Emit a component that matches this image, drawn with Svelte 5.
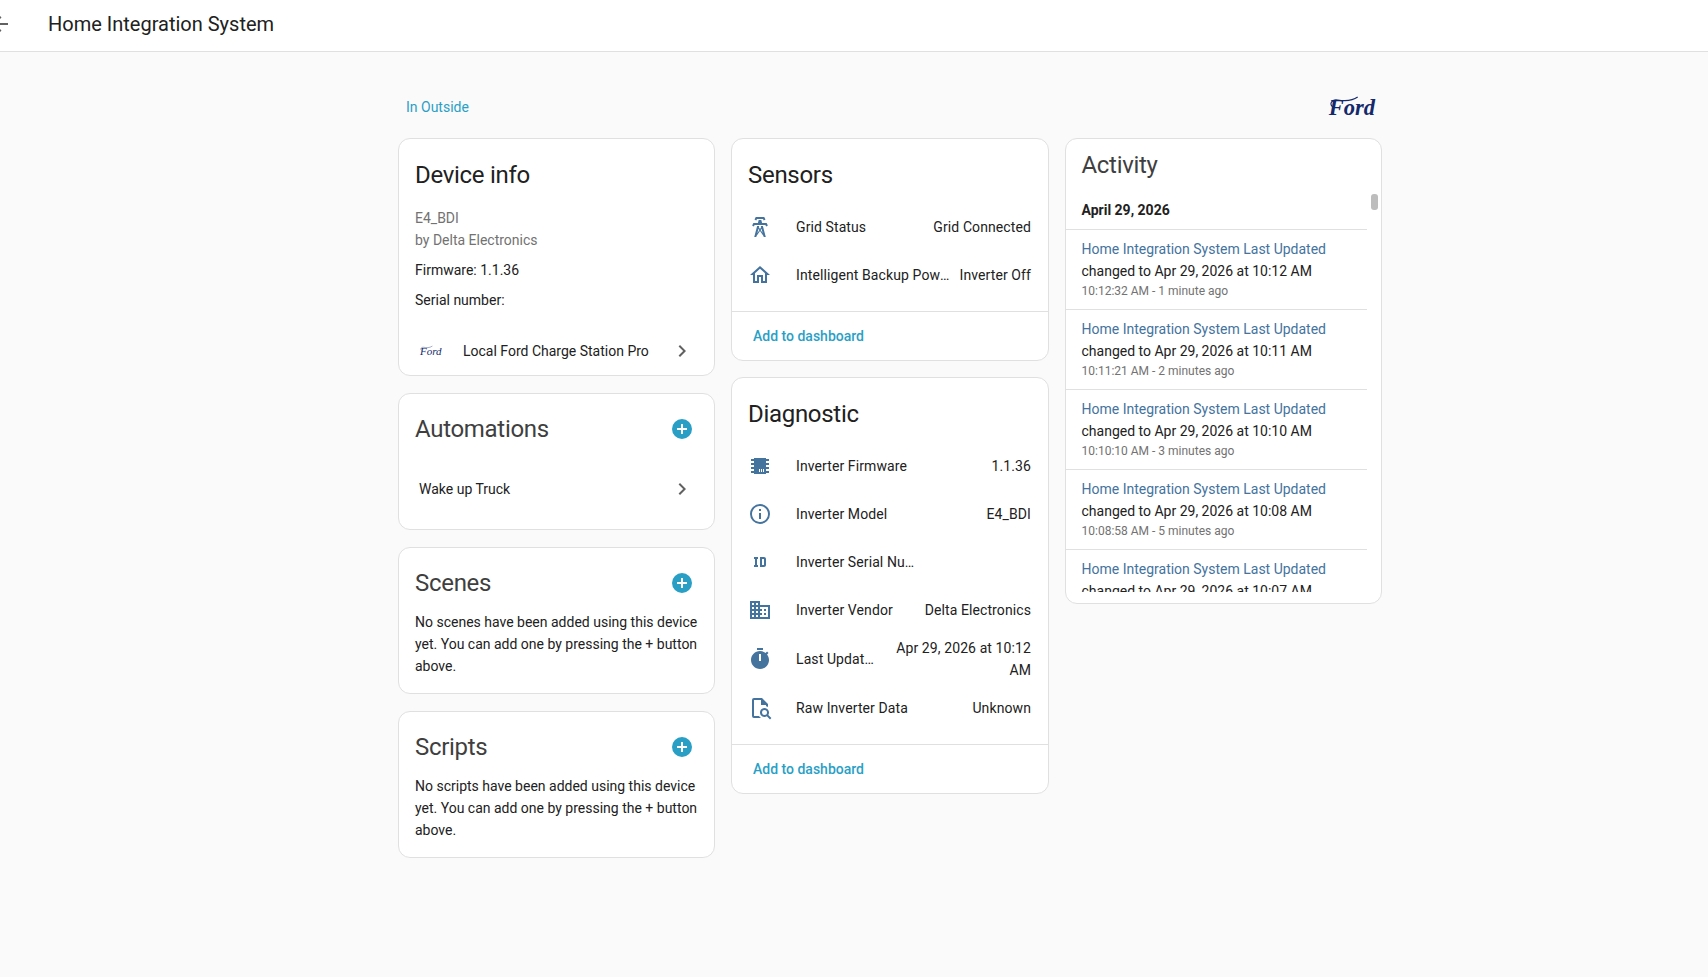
<script lang="ts">
  const icons = {
    tower: 'M8.28,5.45L6.5,4.55L7.76,2H16.23L17.5,4.55L15.72,5.44L15,4H9L8.28,5.45M18.62,8H14.09L13.3,5H10.7L9.91,8H5.38L4.1,10.55L5.89,11.44L6.62,10H17.38L18.1,11.45L19.89,10.56L18.62,8M17.77,22H15.7L15.46,21.1L12,15.9L8.53,21.1L8.3,22H6.23L9.12,11H11.19L10.83,12.35L12,14.1L13.16,12.35L12.81,11H14.88L17.77,22M11.4,15L10.5,13.65L9.32,18.13L11.4,15M14.68,18.12L13.5,13.64L12.6,15L14.68,18.12Z',
    home: 'M12 5.69L17 10.19V18H15V12H9V18H7V10.19L12 5.69M12 3L2 12H5V20H11V14H13V20H19V12H22L12 3Z',
    chip: 'M6,4H18V5H21V7H18V9H21V11H18V13H21V15H18V17H21V19H18V20H6V19H3V17H6V15H3V13H6V11H3V9H6V7H3V5H6V4M11,15V18H12V15H11M13,15V18H14V15H13M15,15V18H16V15H15Z',
    info: 'M11,9H13V7H11M12,20C7.59,20 4,16.41 4,12C4,7.59 7.59,4 12,4C16.41,4 20,7.59 20,12C20,16.41 16.41,20 12,20M12,2A10,10 0 0,0 2,12A10,10 0 0,0 12,22A10,10 0 0,0 22,12A10,10 0 0,0 12,2M11,17H13V11H11V17Z',
    id: 'M10 7V9H9V15H10V17H6V15H7V9H6V7H10M16 7C17.11 7 18 7.9 18 9V15C18 16.11 17.11 17 16 17H12V7M16 9H14V15H16V9Z',
    domain: 'M18,15H16V17H18M18,11H16V13H18M20,19H12V17H14V15H12V13H14V11H12V9H20M10,7H8V5H10M10,11H8V9H10M10,15H8V13H10M10,19H8V17H10M6,7H4V5H6M6,11H4V9H6M6,15H4V13H6M6,19H4V17H6M12,7V3H2V21H22V7H12Z',
    timer: 'M19.03 7.39L20.45 5.97C20 5.46 19.55 5 19.04 4.56L17.62 6C16.07 4.74 14.12 4 12 4C7.03 4 3 8.03 3 13S7.03 22 12 22C17 22 21 17.97 21 13C21 10.88 20.26 8.93 19.03 7.39M13 14H11V7H13V14M15 1H9V3H15V1Z',
    file: 'M14,2H6A2,2 0 0,0 4,4V20A2,2 0 0,0 6,22H13C12.59,21.75 12.2,21.44 11.86,21.1C11.53,20.77 11.25,20.4 11,20H6V4H13V9H18V10.18C18.71,10.34 19.39,10.61 20,11V8L14,2M20.31,18.9C21.64,16.79 21,14 18.91,12.68C16.8,11.35 14,12 12.69,14.08C11.35,16.19 12,18.97 14.09,20.3C15.55,21.23 17.41,21.23 18.88,20.32L22,23.39L23.39,22L20.31,18.9M16.5,19A2.5,2.5 0 0,1 14,16.5A2.5,2.5 0 0,1 16.5,14A2.5,2.5 0 0,1 19,16.5A2.5,2.5 0 0,1 16.5,19Z'
  };
  const chevron = 'M8.59,16.58L13.17,12L8.59,7.41L10,6L16,12L10,18L8.59,16.58Z';
  const plus = 'M17,13H13V17H11V13H7V11H11V7H13V11H17M12,2A10,10 0 0,0 2,12A10,10 0 0,0 12,22A10,10 0 0,0 22,12A10,10 0 0,0 12,2Z';
  const back = 'M20,11V13H8L13.5,18.5L12.08,19.92L4.16,12L12.08,4.08L13.5,5.5L8,11H20Z';
  // flourish on the F of the logo, the word itself stays real text
  const swash = 'M5 10 C-1 7 3 1 9 2 C15 3 23 4 30 -1';

  const sensors = [
    { icon: icons.tower, name: 'Grid Status', value: 'Grid Connected' },
    { icon: icons.home, name: 'Intelligent Backup Power', value: 'Inverter Off', nameWidth: 154 }
  ];
  const diagnostics = [
    { icon: icons.chip, name: 'Inverter Firmware', value: '1.1.36' },
    { icon: icons.info, name: 'Inverter Model', value: 'E4_BDI' },
    { icon: icons.id, name: 'Inverter Serial Number', value: '', nameWidth: 121 },
    { icon: icons.domain, name: 'Inverter Vendor', value: 'Delta Electronics' },
    { icon: icons.timer, name: 'Last Updated', value: 'Apr 29, 2026 at 10:12 AM', tall: true, nameWidth: 80 },
    { icon: icons.file, name: 'Raw Inverter Data', value: 'Unknown' }
  ];
  const activity = [
    { change: 'Apr 29, 2026 at 10:12 AM', time: '10:12:32 AM - 1 minute ago' },
    { change: 'Apr 29, 2026 at 10:11 AM', time: '10:11:21 AM - 2 minutes ago' },
    { change: 'Apr 29, 2026 at 10:10 AM', time: '10:10:10 AM - 3 minutes ago' },
    { change: 'Apr 29, 2026 at 10:08 AM', time: '10:08:58 AM - 5 minutes ago' },
    { change: 'Apr 29, 2026 at 10:07 AM', time: '10:07:47 AM - 6 minutes ago' }
  ];
</script>

<header class="topbar">
  <svg class="back" viewBox="0 0 24 24"><path d={back} /></svg>
  <h1>Home Integration System</h1>
</header>

<main class="page">
  <div class="above">
    <span class="area">In Outside</span>
    <span class="ford big">Ford<svg class="swash" viewBox="0 0 30 20"><path d={swash} /></svg></span>
  </div>

  <div class="columns">
    <div class="col">
      <section class="card">
        <h2 class="title first">Device info</h2>
        <div class="info">
          <div class="muted">E4_BDI</div>
          <div class="muted">by Delta Electronics</div>
          <div class="extra">Firmware: 1.1.36</div>
          <div class="extra">Serial number:</div>
        </div>
        <div class="link-row">
          <span class="ford small">Ford<svg class="swash" viewBox="0 0 30 20"><path d={swash} /></svg></span>
          <span class="link-text">Local Ford Charge Station Pro</span>
          <svg class="chevron" viewBox="0 0 24 24"><path d={chevron} /></svg>
        </div>
      </section>

      <section class="card auto">
        <div class="head">
          <h2 class="title soft">Automations</h2>
          <svg class="plus" viewBox="0 0 24 24"><path d={plus} /></svg>
        </div>
        <div class="link-row plain">
          <span class="link-text">Wake up Truck</span>
          <svg class="chevron" viewBox="0 0 24 24"><path d={chevron} /></svg>
        </div>
      </section>

      <section class="card">
        <div class="head">
          <h2 class="title soft">Scenes</h2>
          <svg class="plus" viewBox="0 0 24 24"><path d={plus} /></svg>
        </div>
        <p class="empty">No scenes have been added using this device yet. You can add one by pressing the + button above.</p>
      </section>

      <section class="card">
        <div class="head">
          <h2 class="title soft">Scripts</h2>
          <svg class="plus" viewBox="0 0 24 24"><path d={plus} /></svg>
        </div>
        <p class="empty">No scripts have been added using this device yet. You can add one by pressing the + button above.</p>
      </section>
    </div>

    <div class="col middle">
      <section class="card">
        <h2 class="title first">Sensors</h2>
        <div class="rows">
          {#each sensors as s}
            <div class="row">
              <svg class="state" viewBox="0 0 24 24"><path d={s.icon} /></svg>
              <span class="name" class:fixed={s.nameWidth} style:width={s.nameWidth ? s.nameWidth + 'px' : null}>{s.name}</span>
              <span class="value">{s.value}</span>
            </div>
          {/each}
        </div>
        <div class="actions">Add to dashboard</div>
      </section>

      <section class="card">
        <h2 class="title first">Diagnostic</h2>
        <div class="rows">
          {#each diagnostics as d}
            <div class="row" class:tall={d.tall}>
              <svg class="state" viewBox="0 0 24 24"><path d={d.icon} /></svg>
              <span class="name" class:fixed={d.nameWidth} style:width={d.nameWidth ? d.nameWidth + 'px' : null}>{d.name}</span>
              <span class="value">{d.value}</span>
            </div>
          {/each}
        </div>
        <div class="actions">Add to dashboard</div>
      </section>
    </div>

    <div class="col">
      <section class="card activity">
        <h2 class="title soft">Activity</h2>
        <div class="scrollbar"></div>
        <div class="log">
          <div class="date">April 29, 2026</div>
          {#each activity as a}
            <div class="entry">
              <div class="entity">Home Integration System Last Updated</div>
              <div class="change">changed to {a.change}</div>
              <div class="time">{a.time}</div>
            </div>
          {/each}
        </div>
      </section>
    </div>
  </div>
</main>

<style>
  :global(body) {
    background: #fafafa;
    font-family: Roboto, "Liberation Sans", sans-serif;
    color: #212121;
    overflow: hidden;
  }

  .topbar {
    height: 48px;
    padding-bottom: 3px;
    background: #fff;
    border-bottom: 1px solid #e0e0e0;
    display: flex;
    align-items: center;
    overflow: hidden;
  }
  .back { width: 24px; height: 24px; margin-left: -12px; fill: #616161; flex: none; }
  .topbar h1 { margin: 0 0 0 36px; font-size: 20px; font-weight: 400; }

  .page { width: 984px; margin-left: 398px; }

  .above {
    height: 86px;
    display: flex;
    align-items: flex-end;
    justify-content: space-between;
    padding: 0 7px 0 8px;
    box-sizing: border-box;
  }
  .area { font-size: 14px; color: #2a9fc6; line-height: 22px; margin-bottom: 20px; }

  .ford {
    font-family: "Liberation Serif", serif;
    font-style: italic;
    font-weight: 700;
    color: #14296b;
    position: relative;
  }
  .swash { position: absolute; left: 0; top: 8%; width: 62%; height: 80%; fill: none; stroke: #14296b; stroke-width: 1.2; overflow: visible; }
  .ford.big { font-size: 22.5px; line-height: 24px; margin-bottom: 18px; }
  .ford.small { font-size: 11px; line-height: 14px; width: 20px; margin-left: 17px; margin-right: 23px; flex: none; font-weight: 400; white-space: nowrap; }
  .ford.small .swash { stroke-width: 0.9; }

  .columns { display: grid; grid-template-columns: 317px 318px 317px; column-gap: 16px; align-items: start; }
  .col { display: flex; flex-direction: column; gap: 17px; }
  .col.middle { gap: 16px; }

  .card {
    background: #fff;
    border: 1px solid #e0e0e0;
    border-radius: 12px;
    position: relative;
  }
  .title {
    margin: 0;
    padding: 11px 16px 1px;
    font-size: 24px;
    line-height: 48px;
    font-weight: 400;
    color: #212121;
    letter-spacing: -0.3px;
  }
  .title.first { padding: 12px 16px 0; }
  .title.soft { color: #3f3f3f; }
  .head { display: flex; justify-content: space-between; align-items: flex-start; }
  .plus { width: 24px; height: 24px; fill: #2a9fc6; margin: 23px 20px 0 0; flex: none; }

  .info { padding: 8px 16px 0; font-size: 14px; line-height: 22px; }
  .muted { color: #727272; }
  .extra { margin-top: 8px; }

  .link-row {
    height: 48px;
    margin-top: 16px;
    padding: 0 20px 0 4px;
    display: flex;
    align-items: center;
    font-size: 14px;
  }
  .link-row.plain { padding-left: 20px; }
  .auto { padding-bottom: 16px; }
  .auto .link-row { margin-top: 11px; }
  .link-text { flex: 1; }
  .chevron { width: 24px; height: 24px; fill: #616161; flex: none; }

  .empty { margin: 3px 0 0; padding: 0 16px 16px; font-size: 14px; line-height: 22px; color: #212121; }

  .rows { padding: 4px 17px 12px 16px; }
  .row { height: 48px; display: flex; align-items: center; font-size: 14px; letter-spacing: 0.1px; }
  .row.tall { height: 50px; }
  .state { width: 24px; height: 24px; fill: #44739e; flex: none; margin-right: 24px; }
  .name { flex: 1 1 auto; min-width: 0; white-space: nowrap; overflow: hidden; text-overflow: ellipsis; color: #212121; padding-right: 8px; }
  .name.fixed { flex: none; padding-right: 0; box-sizing: border-box; }
  .value { margin-left: auto; text-align: right; line-height: 22px; flex-shrink: 0; max-width: 140px; }

  .actions {
    border-top: 1px solid #e0e0e0;
    height: 49px;
    box-sizing: border-box;
    padding: 0 21px 1px;
    display: flex;
    align-items: center;
    font-size: 14px;
    font-weight: 500;
    color: #2a9fc6;
  }

  .activity { height: 466px; box-sizing: border-box; padding-bottom: 11px; display: flex; flex-direction: column; }
  .activity .title { padding: 2px 16px 0 15.5px; flex: none; }
  .scrollbar { position: absolute; right: 3px; top: 55px; width: 7px; height: 16px; border-radius: 3px; background: #bdbdbd; }
  .log { flex: 1; min-height: 0; overflow: hidden; width: 301px; font-size: 14px; }
  .date { height: 41px; padding: 10px 16px 0 15.5px; box-sizing: border-box; font-weight: 700; line-height: 22px; border-bottom: 1px solid #e0e0e0; color: #212121; }
  .entry { height: 80px; box-sizing: border-box; padding: 8px 16px 0 15.5px; border-bottom: 1px solid #e0e0e0; line-height: 22px; }
  .entity { color: #44739e; }
  .change { color: #212121; }
  .time { color: #727272; font-size: 12px; line-height: 20px; margin-top: -1px; }
</style>
